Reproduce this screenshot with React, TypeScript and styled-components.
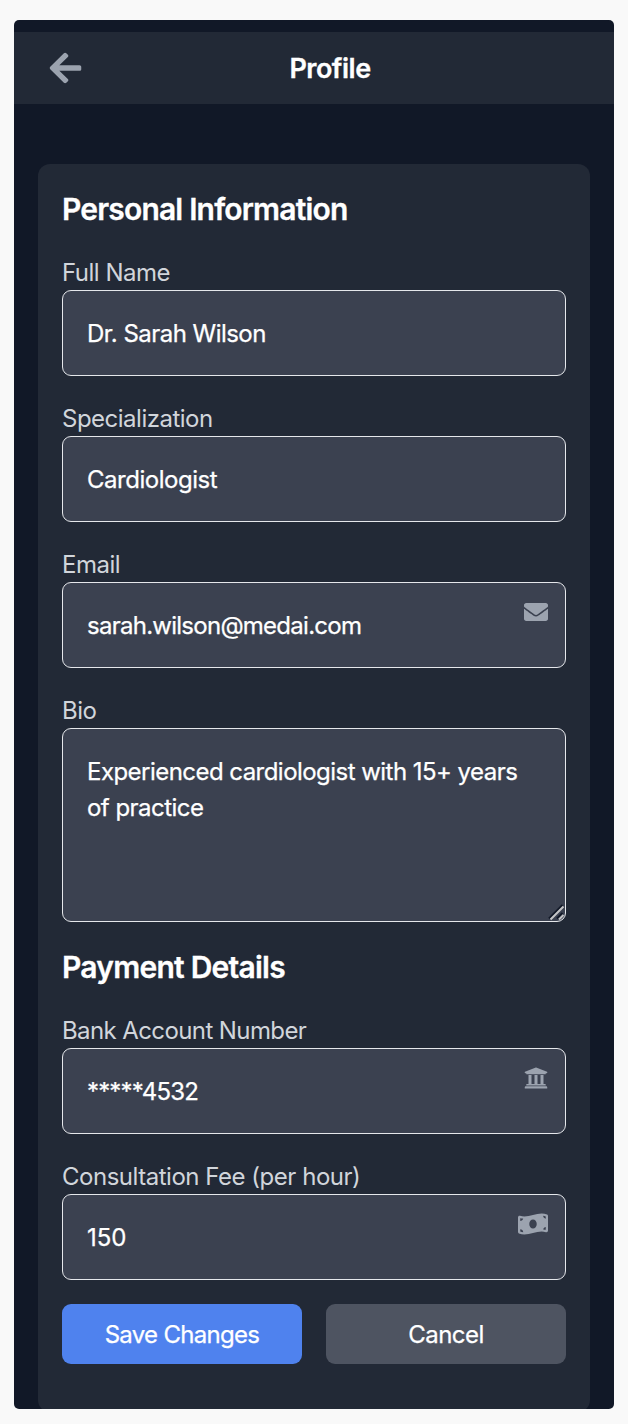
import React from 'react';
import styled, { createGlobalStyle } from 'styled-components';
import { FaArrowLeft, FaEnvelope, FaUniversity, FaMoneyBillWave } from 'react-icons/fa';

const GlobalStyle = createGlobalStyle`
  *, *::before, *::after { box-sizing: border-box; }
  body {
    margin: 0;
    background: #f9f9f9;
    font-family: Inter, "Liberation Sans", sans-serif;
    font-size: 24px;
    line-height: 36px;
    color: #ffffff;
    -webkit-font-smoothing: antialiased;
  }
`;

const Page = styled.div`
  height: 1424px;
  padding: 20px 14px 15px;
`;

const Screen = styled.div`
  height: 100%;
  padding-top: 12px;
  overflow: hidden;
  border-radius: 5px;
  background: #111827;
`;

const Header = styled.header`
  display: grid;
  grid-template-columns: 32px 1fr;
  align-items: center;
  height: 72px;
  padding: 0 36px;
  background: #222936;
`;

const BackButton = styled.button`
  display: flex;
  margin-left: -1px;
  padding: 0 0 1px;
  border: 0;
  background: none;
  color: #9ca3af;
  font-size: 36px;
`;

const Title = styled.h1`
  margin: 0;
  padding-top: 2px;
  font-size: 27px;
  font-weight: 600;
  letter-spacing: -0.5px;
  text-align: center;
  -webkit-text-stroke: 0.3px currentColor;
`;

const Card = styled.form`
  display: flex;
  flex-direction: column;
  gap: 24px;
  height: 1248px;
  margin: 60px 24px 0;
  padding: 24px;
  border-radius: 12px;
  background: #222936;
`;

const SectionTitle = styled.h2<{ $tracking: number }>`
  margin: 0;
  font-size: 30px;
  font-weight: 600;
  line-height: 42px;
  letter-spacing: ${(p) => p.$tracking}px;
  -webkit-text-stroke: 0.3px currentColor;
`;

const Field = styled.div`
  display: flex;
  flex-direction: column;
`;

const Label = styled.label<{ $tracking: number }>`
  height: 36px;
  padding-top: 1px;
  color: #d1d5db;
  letter-spacing: ${(p) => p.$tracking}px;
`;

const Control = styled.div`
  position: relative;
  display: flex;
`;

const Input = styled.input<{ $tracking: number }>`
  width: 100%;
  height: 86px;
  padding: 24px;
  border: 1px solid #e5e7eb;
  border-radius: 9px;
  outline: none;
  background: #3b4150;
  color: #ffffff;
  font: inherit;
  letter-spacing: ${(p) => p.$tracking}px;
  -webkit-text-stroke: 0.25px currentColor;
`;

const TextArea = styled(Input)`
  height: 194px;
  padding-top: 25px;
  resize: none;
  overflow: hidden;
`;

const FieldIcon = styled.span`
  position: absolute;
  top: 18px;
  right: 18px;
  display: flex;
  color: #9ca3af;
  font-size: 24px;
`;

const BanknoteIcon = styled(FaMoneyBillWave)`
  width: 30px;
  height: 24px;
`;

const Grip = styled.svg`
  position: absolute;
  right: 1px;
  bottom: 1px;
`;

const Actions = styled.div`
  display: grid;
  grid-template-columns: 1fr 1fr;
  gap: 24px;
`;

const Button = styled.button<{ $primary?: boolean }>`
  height: 60px;
  padding: 2px 0 0;
  border: 0;
  border-radius: 9px;
  background: ${(p) => (p.$primary ? '#4f82ee' : '#4e5461')};
  color: #ffffff;
  font: inherit;
  letter-spacing: ${(p) => (p.$primary ? -0.7 : -0.55)}px;
  -webkit-text-stroke: 0.25px currentColor;
`;

type TextFieldProps = {
  id: string;
  label: string;
  value: string;
  labelTracking?: number;
  tracking?: number;
  icon?: React.ReactNode;
};

function TextField({ id, label, value, labelTracking = -0.5, tracking = -0.53, icon }: TextFieldProps) {
  return (
    <Field>
      <Label htmlFor={id} $tracking={labelTracking}>{label}</Label>
      <Control>
        <Input id={id} defaultValue={value} $tracking={tracking} />
        {icon && <FieldIcon>{icon}</FieldIcon>}
      </Control>
    </Field>
  );
}

export default function App() {
  return (
    <>
      <GlobalStyle />
      <Page>
        <Screen>
          <Header>
            <BackButton type="button" aria-label="Back"><FaArrowLeft /></BackButton>
            <Title>Profile</Title>
          </Header>
          <Card>
            <SectionTitle $tracking={-0.82}>Personal Information</SectionTitle>
            <TextField id="name" label="Full Name" value="Dr. Sarah Wilson" />
            <TextField id="specialization" label="Specialization" value="Cardiologist" tracking={-0.48} />
            <TextField id="email" label="Email" value="sarah.wilson@medai.com" tracking={-0.74} icon={<FaEnvelope />} />
            <Field>
              <Label htmlFor="bio" $tracking={-0.5}>Bio</Label>
              <Control>
                <TextArea as="textarea" id="bio" $tracking={-0.54} defaultValue="Experienced cardiologist with 15+ years of practice" />
                <Grip width="17" height="17" viewBox="0 0 17 17" fill="none">
                  <path d="M1 14.5 14.5 1M9 14.5 14.5 9" stroke="#111827" strokeWidth="2" />
                  <path d="M2.5 15.5 15.5 2.5M11 15.5 15.5 11" stroke="#c3c4c6" strokeWidth="2" />
                </Grip>
              </Control>
            </Field>
            <SectionTitle $tracking={-0.76}>Payment Details</SectionTitle>
            <TextField id="account" label="Bank Account Number" value="*****4532" labelTracking={-0.6} tracking={-0.85} icon={<FaUniversity />} />
            <TextField id="fee" label="Consultation Fee (per hour)" value="150" labelTracking={-0.48} tracking={0} icon={<BanknoteIcon />} />
            <Actions>
              <Button type="button" $primary>Save Changes</Button>
              <Button type="button">Cancel</Button>
            </Actions>
          </Card>
        </Screen>
      </Page>
    </>
  );
}
